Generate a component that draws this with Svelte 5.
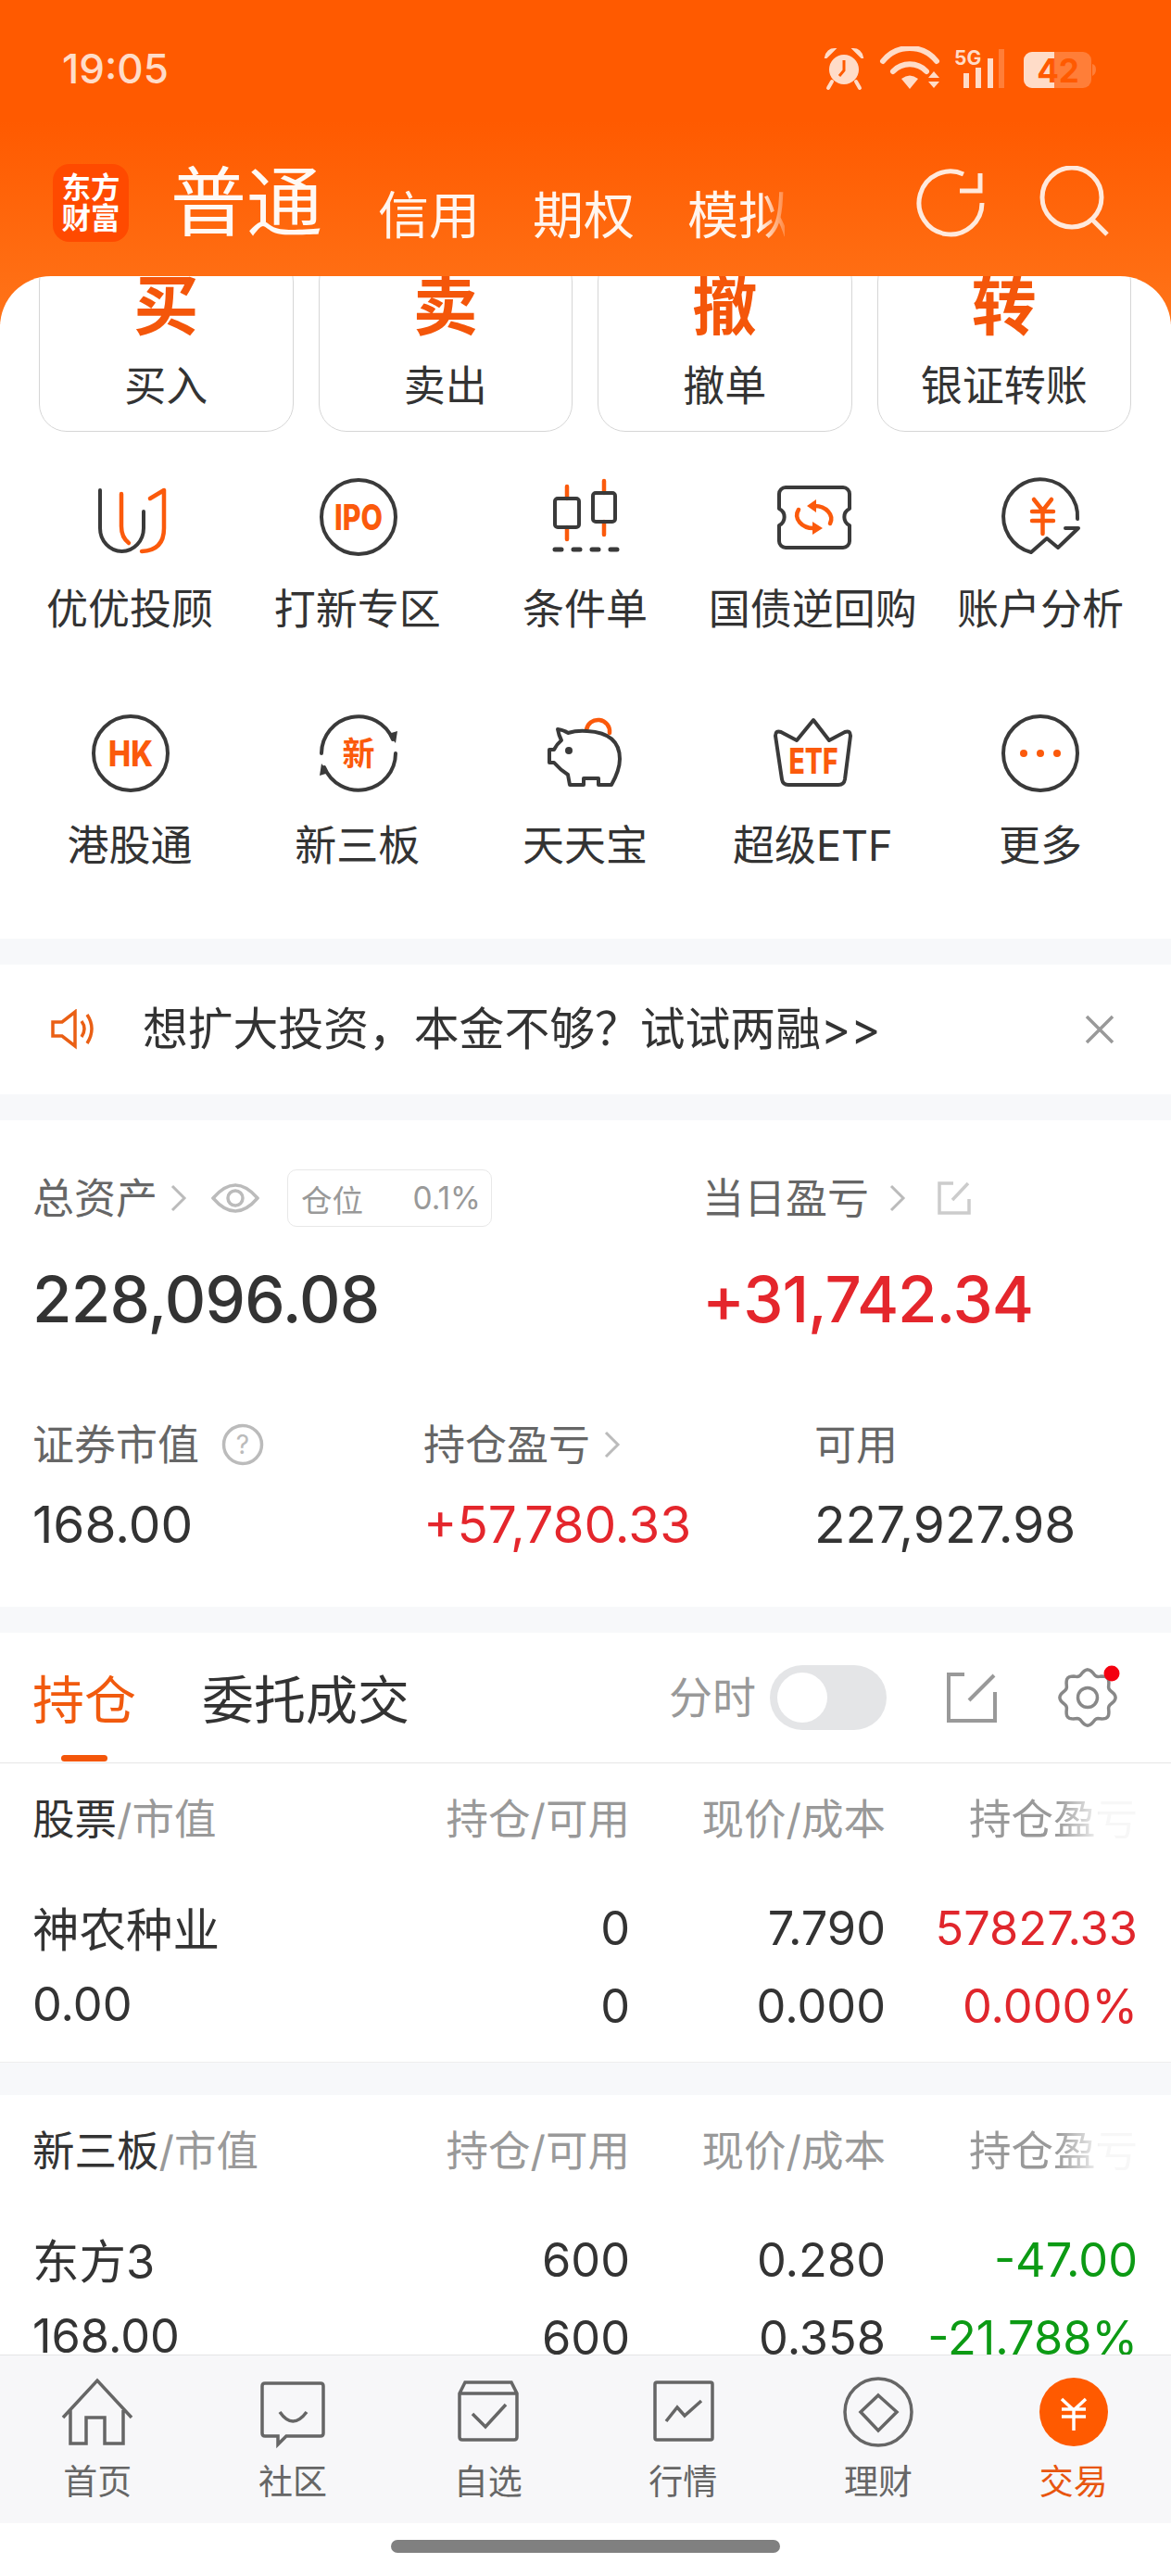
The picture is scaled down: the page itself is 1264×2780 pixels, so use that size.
<script>
	const actions = [
		{ glyph: '买', label: '买入' },
		{ glyph: '卖', label: '卖出' },
		{ glyph: '撤', label: '撤单' },
		{ glyph: '转', label: '银证转账' }
	];

	const shortcuts = [
		{ icon: 'advisor', label: '优优投顾' },
		{ icon: 'ipo', label: '打新专区' },
		{ icon: 'candle', label: '条件单' },
		{ icon: 'repo', label: '国债逆回购' },
		{ icon: 'analysis', label: '账户分析' },
		{ icon: 'hk', label: '港股通' },
		{ icon: 'neeq', label: '新三板' },
		{ icon: 'piggy', label: '天天宝' },
		{ icon: 'etf', label: '超级ETF' },
		{ icon: 'more', label: '更多' }
	];

	const holdings = [
		{
			market: '股票',
			rows: [
				{ name: '神农种业', amount: '0', price: '7.790', profit: '57827.33', tone: 'up' },
				{ name: '0.00', amount: '0', price: '0.000', profit: '0.000%', tone: 'up' }
			]
		},
		{
			market: '新三板',
			rows: [
				{ name: '东方3', amount: '600', price: '0.280', profit: '-47.00', tone: 'down' },
				{ name: '168.00', amount: '600', price: '0.358', profit: '-21.788%', tone: 'down' }
			]
		}
	];

	const tabs = [
		{ icon: 'home', label: '首页' },
		{ icon: 'community', label: '社区' },
		{ icon: 'watch', label: '自选' },
		{ icon: 'market', label: '行情' },
		{ icon: 'wealth', label: '理财' },
		{ icon: 'trade', label: '交易' }
	];

	// Wavy outline for the settings cog
	function gearPath(cx, cy, radius, wave, teeth) {
		const points = [];
		for (let i = 0; i < 96; i++) {
			const t = (i / 96) * Math.PI * 2;
			const r = radius + wave * Math.cos(teeth * t);
			points.push(`${(cx + r * Math.sin(t)).toFixed(1)} ${(cy - r * Math.cos(t)).toFixed(1)}`);
		}
		return 'M' + points.join('L') + 'Z';
	}
</script>

<div class="page">
	<header class="top">
		<div class="status">
			<span class="time">19:05</span>
			<svg class="status-icons" width="296" height="50" viewBox="0 0 296 50">
				<circle cx="23" cy="25" r="16" class="st-fill" />
				<path d="M23 15V26L18 32" class="st-hand" />
				<path d="M3 12Q5 3 13 3L4 12Z M43 12Q41 3 33 3L42 12Z" class="st-fill st-line" />
				<path d="M10 38L6 45M36 38L40 45" class="st-line" />
				<path d="M65 16A37 37 0 0 1 123 16" class="st-line wide" />
				<path d="M76 27A25 25 0 0 1 112 27" class="st-line wide" />
				<path d="M85 35Q94 28 103 35L94 46Z" class="st-fill" />
				<path d="M114 34H126L120 27ZM114 38H126L120 45Z" class="st-fill" />
				<text x="142" y="20" class="st-5g">5G</text>
				<rect x="152" y="29" width="6" height="16" class="st-fill" />
				<rect x="165" y="23" width="6" height="22" class="st-fill" />
				<rect x="178" y="13" width="6" height="32" class="st-fill" />
				<rect x="190" y="3" width="6" height="42" class="st-faint" />
				<rect x="217" y="6" width="73" height="39" rx="9" class="st-faint" />
				<path d="M226 6H250V45H226A9 9 0 0 1 217 36V15A9 9 0 0 1 226 6Z" class="st-fill" />
				<path d="M291 19Q295 20 295 25Q295 30 291 32Z" class="st-faint" />
				<text x="254" y="39" class="st-batt">42</text>
			</svg>
		</div>
		<nav class="nav">
			<div class="logo"><span>东方</span><span>财富</span></div>
			<span class="nav-main">普通</span>
			<span class="nav-item">信用</span>
			<span class="nav-item">期权</span>
			<span class="nav-item faded">模拟</span>
			<svg class="nav-btn refresh" width="80" height="80" viewBox="0 0 80 80">
				<path d="M54 9A34 34 0 1 0 74 40" />
				<path d="M50 27H72V8" />
			</svg>
			<svg class="nav-btn" width="80" height="80" viewBox="0 0 80 80">
				<circle cx="36" cy="34" r="32" />
				<path d="M58 58L74 74" />
			</svg>
		</nav>
	</header>

	<main class="content">
		<section class="actions">
			{#each actions as action}
				<div class="action">
					<span class="action-glyph">{action.glyph}</span>
					<span class="action-label">{action.label}</span>
				</div>
			{/each}
		</section>

		<section class="shortcuts">
			{#each shortcuts as item}
				<div class="shortcut">
					<svg width="100" height="100" viewBox="0 0 100 100" class="shortcut-icon">
						{#if item.icon === 'advisor'}
							<path class="ink" d="M18 21V62A23.5 25 0 0 0 65 62V44" />
							<path class="accent" d="M41 25V60Q41 72 49 78" />
							<path class="accent" d="M72 30L87 21V62Q87 86 63 87" />
						{:else if item.icon === 'ipo'}
							<circle class="ink" cx="51" cy="50" r="40" />
							<text class="badge" x="51" y="64" textLength="52" lengthAdjust="spacingAndGlyphs">IPO</text>
						{:else if item.icon === 'candle'}
							<path class="accent" d="M31 17V30M31 61V74M71 11V24M71 55V69" />
							<rect class="ink" x="18" y="30" width="26" height="31" rx="3" />
							<rect class="ink" x="59" y="24" width="24" height="31" rx="3" />
							<path class="ink thick" d="M18 85H25M38 85H45M58 85H65M78 85H85" />
						{:else if item.icon === 'repo'}
							<path class="ink" d="M21 18H83A7 7 0 0 1 90 25V41A10 10 0 0 0 90 59V76A7 7 0 0 1 83 83H21A7 7 0 0 1 14 76V59A10 10 0 0 0 14 41V25A7 7 0 0 1 21 18Z" />
							<path class="accent" d="M52 38A18 14 0 0 1 69 57M35 42A18 14 0 0 0 52 62" />
							<path class="accent-fill" d="M54 31L44 38L54 45ZM50 55L61 62L50 69Z" />
						{:else if item.icon === 'analysis'}
							<path class="ink" d="M90 52A40 40 0 1 0 40 88L57 73L69 83L91 62H77" />
							<path class="accent" d="M43 31L52.5 43L62 31M41 44H64M41 54H64M52.5 43V68" />
						{:else if item.icon === 'hk'}
							<circle class="ink" cx="51" cy="50" r="40" />
							<text class="badge" x="51" y="64" textLength="48" lengthAdjust="spacingAndGlyphs">HK</text>
						{:else if item.icon === 'neeq'}
							<path class="ink" d="M11 50A40 40 0 0 1 88 35M91 50A40 40 0 0 1 14 65" />
							<path class="ink-fill" d="M83 29L93 26L91 39ZM19 71L9 74L11 61Z" />
							<text class="badge han" x="51" y="63">新</text>
						{:else if item.icon === 'piggy'}
							<path class="accent" d="M52 25A12 12 0 0 1 77 28" />
							<path class="ink" d="M21 24Q28 25 32 28Q42 25 53 26Q88 28 88 56Q88 68 79 84H65V77H49V84H34L32 73Q24 68 17 60H12V46H17Q20 40 25 36Q22 30 21 24Z" />
							<circle class="ink-fill" cx="33" cy="47" r="4" />
						{:else if item.icon === 'etf'}
							<path class="ink" d="M51 14L68 36L85 27Q91 25 91 31L85 78Q84 84 78 84H24Q18 84 17 78L10 31Q10 25 16 27L33 36Z" />
							<text class="badge" x="51" y="72" textLength="53" lengthAdjust="spacingAndGlyphs">ETF</text>
						{:else}
							<circle class="ink" cx="50" cy="50" r="40" />
							<circle class="accent-fill" cx="32" cy="50" r="4" />
							<circle class="accent-fill" cx="50" cy="50" r="4" />
							<circle class="accent-fill" cx="68" cy="50" r="4" />
						{/if}
					</svg>
					<span class="shortcut-label">{item.label}</span>
				</div>
			{/each}
		</section>

		<div class="gap"></div>

		<section class="notice">
			<svg class="notice-icon" width="50" height="44" viewBox="0 0 50 44">
				<path d="M3 14H13L27 3V40L13 29H3Z" />
				<path d="M34 13Q40 21 34 30M40 6Q50 21 40 37" />
			</svg>
			<span class="notice-text">想扩大投资，本金不够？试试两融&gt;&gt;</span>
			<svg class="notice-close" width="32" height="32" viewBox="0 0 32 32">
				<path d="M2 2L30 30M30 2L2 30" />
			</svg>
		</section>

		<div class="gap"></div>

		<section class="assets">
			<div class="assets-top">
				<div>
					<div class="label-row">
						<span class="label">总资产</span>
						<svg class="chev" width="20" height="30" viewBox="0 0 20 30"><path d="M3 2L16 15L3 28" /></svg>
						<svg class="eye" width="52" height="36" viewBox="0 0 52 36">
							<path d="M2 18Q26 -10 50 18Q26 46 2 18Z" />
							<circle cx="26" cy="18" r="8" />
						</svg>
						<div class="ratio"><span>仓位</span><span>0.1%</span></div>
					</div>
					<div class="total">228,096.08</div>
				</div>
				<div>
					<div class="label-row">
						<span class="label">当日盈亏</span>
						<svg class="chev day" width="20" height="30" viewBox="0 0 20 30"><path d="M3 2L16 15L3 28" /></svg>
						<svg class="open-small" width="38" height="38" viewBox="0 0 38 38">
							<path d="M18 3H3V35H35V20M17 21L34 3" />
						</svg>
					</div>
					<div class="total up">+31,742.34</div>
				</div>
			</div>
			<div class="assets-bottom">
				<div>
					<div class="label-line">
						<span class="label">证券市值</span>
						<svg class="help" width="46" height="46" viewBox="0 0 46 46">
							<circle cx="23" cy="23" r="20.5" />
							<text x="23" y="33">?</text>
						</svg>
					</div>
					<div class="amount">168.00</div>
				</div>
				<div>
					<div class="label-line">
						<span class="label">持仓盈亏</span>
						<svg class="chev hold" width="20" height="30" viewBox="0 0 20 30"><path d="M3 2L16 15L3 28" /></svg>
					</div>
					<div class="amount up">+57,780.33</div>
				</div>
				<div>
					<div class="label-line"><span class="label">可用</span></div>
					<div class="amount">227,927.98</div>
				</div>
			</div>
		</section>

		<div class="gap"></div>

		<section class="tabs">
			<span class="tab active">持仓</span>
			<span class="tab">委托成交</span>
			<span class="realtime">分时</span>
			<div class="toggle"><span class="knob"></span></div>
			<svg class="open-big" width="60" height="60" viewBox="0 0 60 60">
				<path d="M22 5H5V55H55V24M27 33L54 6" />
			</svg>
			<svg class="gear" width="76" height="70" viewBox="0 0 76 70">
				<path d={gearPath(37, 35, 27.5, 2.6, 8)} />
				<circle cx="37" cy="35" r="10.5" />
				<circle class="dot" cx="63" cy="9" r="8.5" />
			</svg>
		</section>

		{#each holdings as group, g}
			<section class="holding" class:second={g > 0}>
				<div class="grid head">
					<span><b>{group.market}</b>/市值</span>
					<span>持仓/可用</span>
					<span>现价/成本</span>
					<span class="fade-end"><i>持仓盈亏</i></span>
				</div>
				{#each group.rows as row}
					<div class="grid row">
						<span>{row.name}</span>
						<span>{row.amount}</span>
						<span>{row.price}</span>
						<span class={row.tone}>{row.profit}</span>
					</div>
				{/each}
			</section>
		{/each}
	</main>

	<footer class="tabbar">
		{#each tabs as tab}
			<div class="tabbar-item" class:current={tab.icon === 'trade'}>
				<svg width="80" height="80" viewBox="0 0 80 80">
					{#if tab.icon === 'home'}
						<path d="M3 44L40 4L77 44M11 36V72H28V44H48V72H68V36" />
					{:else if tab.icon === 'community'}
						<path d="M10 7H70Q73 7 73 10V61Q73 64 70 64H33L24 73V64H10Q7 64 7 61V10Q7 7 10 7Z" />
						<path d="M26 38Q40 58 55 38" />
					{:else if tab.icon === 'watch'}
						<path d="M9 18L15 6H65L71 18V65Q71 68 68 68H12Q9 68 9 65ZM9 18H71" />
						<path d="M23 40L37 54L59 30" />
					{:else if tab.icon === 'market'}
						<rect x="10" y="6" width="62" height="62" rx="2" />
						<path d="M22 48L34 33L42 42L60 26" />
					{:else if tab.icon === 'wealth'}
						<circle cx="40" cy="38" r="36" />
						<path d="M40 20L60 38L40 58L21 38Z" />
					{:else}
						<circle class="coin" cx="40" cy="38" r="37" />
						<path class="coin-mark" d="M27 24L40 36L53 24M27 35H53M27 43H53M40 36V58" />
					{/if}
				</svg>
				<span>{tab.label}</span>
			</div>
		{/each}
	</footer>

	<div class="home-area"><span class="home-bar"></span></div>
</div>

<style>
	:global(body) {
		margin: 0;
		background: #fff;
	}

	.page {
		width: 1264px;
		height: 2780px;
		display: flex;
		flex-direction: column;
		overflow: hidden;
		background: #fff;
		color: #333;
		font-family: Inter, 'Noto Sans CJK SC', sans-serif;
	}

	/* Orange header, runs on behind the rounded card corners */
	.top {
		flex: none;
		height: 350px;
		margin-bottom: -52px;
		box-sizing: border-box;
		background: linear-gradient(180deg, #ff5a00 0, #ff5a00 130px, #ff7419 350px);
		color: #fff;
	}

	.status {
		height: 177px;
		box-sizing: border-box;
		padding: 50px 80px 0 67px;
		display: flex;
		justify-content: space-between;
		align-items: flex-start;
	}

	.time {
		font-size: 44px;
		font-weight: 500;
		line-height: 48px;
		color: #ffdcc8;
	}

	.st-fill { fill: #ffdcc8; }
	.st-faint { fill: rgba(255, 255, 255, 0.22); }
	.st-line { stroke: #ffdcc8; stroke-width: 4; fill: none; stroke-linecap: round; }
	.st-fill.st-line { fill: #ffdcc8; stroke-width: 2; }
	.st-line.wide { stroke-width: 6; }
	.st-hand { stroke: #ff5a00; stroke-width: 3; fill: none; }
	.st-5g { fill: #ffdcc8; font-size: 21px; font-weight: 700; }
	.st-batt { fill: #ff5a00; font-size: 35px; font-weight: 700; text-anchor: middle; }

	.nav {
		display: flex;
		align-items: center;
		height: 84px;
		padding-left: 57px;
	}

	.logo {
		width: 82px;
		height: 84px;
		border-radius: 18px;
		background: #ff4a00;
		display: flex;
		flex-direction: column;
		align-items: center;
		justify-content: center;
		font-size: 31.5px;
		font-weight: 700;
		line-height: 33px;
	}

	.nav-main {
		margin-left: 45px;
		margin-right: -2px;
		font-size: 82px;
		line-height: 84px;
		color: #fff9f4;
	}

	.nav-item {
		margin: 26px 0 0 62px;
		width: 105px;
		font-size: 55px;
		line-height: 58px;
		white-space: nowrap;
		color: #fff5ee;
	}

	.nav-item.faded {
		-webkit-mask-image: linear-gradient(90deg, #000 75%, rgba(0, 0, 0, 0.25) 100%);
		mask-image: linear-gradient(90deg, #000 75%, rgba(0, 0, 0, 0.25) 100%);
	}

	.nav-btn {
		flex: none;
		margin-top: 0;
		margin-left: 55px;
		fill: none;
		stroke: #ffe9dc;
		stroke-width: 5;
	}

	.nav-btn.refresh {
		margin-left: 139px;
	}

	.content {
		flex: 1;
		min-height: 0;
		position: relative;
		overflow: hidden;
		background: #fff;
		border-radius: 55px 55px 0 0;
	}

	.actions {
		margin-top: -24px;
		padding: 0 43px 0 42px;
		display: grid;
		grid-template-columns: repeat(4, 1fr);
		gap: 27px;
	}

	.action {
		height: 192px;
		box-sizing: border-box;
		padding-top: 21px;
		display: flex;
		flex-direction: column;
		align-items: center;
		border: 1.5px solid #d6d6d6;
		border-radius: 30px;
	}

	.action-glyph {
		font-size: 70px;
		line-height: 70px;
		font-weight: 700;
		color: #f4560a;
	}

	.action-label {
		margin-top: 23px;
		font-size: 45px;
		line-height: 56px;
		color: #333;
	}

	.shortcuts {
		padding: 42px 18px 70px 17px;
		display: grid;
		grid-template-columns: repeat(5, 1fr);
		row-gap: 75px;
	}

	.shortcut {
		display: flex;
		flex-direction: column;
		align-items: center;
		gap: 20px;
	}

	.shortcut-label {
		font-size: 45px;
		line-height: 60px;
		white-space: nowrap;
	}

	.ink, .accent {
		fill: none;
		stroke-width: 4;
		stroke-linecap: round;
		stroke-linejoin: round;
	}

	.ink { stroke: #3a3a3a; }
	.ink.thick { stroke-width: 5; }
	.accent { stroke: #fb5a0c; stroke-width: 4.5; }
	.ink-fill { fill: #3a3a3a; }
	.accent-fill { fill: #fb5a0c; }

	.badge {
		fill: #fb5a0c;
		font-size: 38px;
		font-weight: 800;
		text-anchor: middle;
	}

	.badge.han {
		font-size: 35px;
		font-weight: 700;
	}

	.gap {
		height: 28px;
		background: #f7f8fa;
	}

	.notice {
		height: 140px;
		display: flex;
		align-items: center;
		padding: 0 61px 0 54px;
	}

	.notice-icon {
		flex: none;
		fill: none;
		stroke: #ea5f14;
		stroke-width: 3.5;
	}

	.notice-text {
		flex: 1;
		margin-left: 50px;
		font-size: 48.8px;
		line-height: 60px;
		white-space: nowrap;
	}

	.notice-close {
		flex: none;
		fill: none;
		stroke: #999;
		stroke-width: 3.5;
	}

	.assets {
		height: 525px;
		box-sizing: border-box;
		padding: 53px 0 0 35px;
	}

	.assets-top {
		display: grid;
		grid-template-columns: 723px 1fr;
	}

	.label-row {
		height: 62px;
		display: flex;
		align-items: center;
	}

	.label {
		padding-top: 2px;
		font-size: 45px;
		line-height: 60px;
		color: #666;
		white-space: nowrap;
	}

	.chev {
		flex: none;
		margin-left: 13px;
		fill: none;
		stroke: #bbb;
		stroke-width: 3;
	}

	.chev.day { margin-left: 21px; }

	.eye {
		flex: none;
		margin-left: 25px;
		fill: none;
		stroke: #bbb;
		stroke-width: 3.5;
	}

	.open-small {
		flex: none;
		margin-left: 32px;
		fill: none;
		stroke: #ccc;
		stroke-width: 3.5;
	}

	.ratio {
		margin-left: 30px;
		width: 221px;
		height: 62px;
		box-sizing: border-box;
		padding: 0 11px 0 14px;
		display: flex;
		justify-content: space-between;
		align-items: center;
		border: 1.5px solid #e8e8e8;
		border-radius: 10px;
		font-size: 33.5px;
		color: #999;
	}

	.total {
		margin-top: 38px;
		font-size: 69px;
		letter-spacing: -0.8px;
		line-height: 80px;
		font-weight: 500;
		color: #333;
	}

	.total.up {
		letter-spacing: -1.1px;
		color: #e4262c;
	}

	.up { color: #e4262c; }
	.down { color: #0c9a14; }

	.assets-bottom {
		margin-top: 87px;
		display: grid;
		grid-template-columns: 422px 422px 1fr;
	}

	.label-line {
		height: 60px;
		display: flex;
		align-items: center;
	}

	.help {
		flex: none;
		margin-left: 24px;
		fill: none;
		stroke: #bbb;
		stroke-width: 3.5;
	}

	.help text {
		fill: #bbb;
		stroke: none;
		font-size: 28px;
		text-anchor: middle;
	}

	.chev.hold { margin-left: 14px; }

	.amount {
		margin-top: 21px;
		font-size: 55px;
		line-height: 70px;
	}

	.tabs {
		height: 141px;
		box-sizing: border-box;
		padding: 0 51px 0 35px;
		display: flex;
		align-items: center;
		border-bottom: 1.5px solid #e6e6e6;
	}

	.tab {
		position: relative;
		margin-right: 71px;
		padding-top: 6px;
		font-size: 56px;
		line-height: 70px;
	}

	.tab.active {
		color: #f15a0e;
	}

	.tab.active::after {
		content: '';
		position: absolute;
		left: 31px;
		right: 31px;
		top: 100px;
		height: 7px;
		border-radius: 4px;
		background: #f4560a;
	}

	.realtime {
		margin-left: auto;
		font-size: 47px;
		line-height: 60px;
		color: #999;
	}

	.toggle {
		flex: none;
		margin-left: 15px;
		width: 126px;
		height: 70px;
		box-sizing: border-box;
		padding: 8px;
		border-radius: 35px;
		background: #e4e5e7;
	}

	.knob {
		display: block;
		width: 54px;
		height: 54px;
		border-radius: 50%;
		background: #fff;
	}

	.open-big {
		flex: none;
		margin-left: 62px;
		fill: none;
		stroke: #999;
		stroke-width: 4;
	}

	.gear {
		flex: none;
		margin-left: 58px;
		fill: none;
		stroke: #888;
		stroke-width: 3.5;
	}

	.gear .dot {
		fill: #f4000f;
		stroke: none;
	}

	.holding {
		padding-bottom: 19px;
		border-bottom: 1.5px solid #eee;
	}

	.holding.second {
		border-top: 35px solid #f7f8fa;
		border-bottom: 0;
	}

	.grid {
		display: grid;
		grid-template-columns: 405px 240px 276px 272px;
		padding: 0 36px 0 35px;
		align-items: center;
	}

	.grid span {
		text-align: right;
		white-space: nowrap;
	}

	.grid span:first-child {
		text-align: left;
	}

	.head {
		height: 114px;
		margin-bottom: 21px;
		font-size: 45.5px;
		color: #999;
	}

	.head b {
		font-weight: 400;
		color: #333;
	}

	.fade-end i {
		display: inline-block;
		font-style: normal;
		-webkit-mask-image: linear-gradient(90deg, #000 52%, rgba(0, 0, 0, 0.08) 78%);
		mask-image: linear-gradient(90deg, #000 52%, rgba(0, 0, 0, 0.08) 78%);
	}

	.row {
		height: 84px;
		font-size: 50.5px;
		color: #333;
	}

	.row span:first-child {
		padding-bottom: 3px;
	}

	.row .up { color: #e0262c; }
	.row .down { color: #0c9a14; }

	.tabbar {
		flex: none;
		height: 182px;
		box-sizing: border-box;
		border-top: 1.5px solid #e4e4e6;
		padding-top: 23px;
		background: #f7f7f9;
		display: grid;
		grid-template-columns: repeat(6, 1fr);
		position: relative;
	}

	.tabbar-item {
		display: flex;
		flex-direction: column;
		align-items: center;
		gap: 12px;
		font-size: 37px;
		line-height: 44px;
		color: #666;
	}

	.tabbar-item.current {
		color: #e8550f;
	}

	.tabbar-item svg {
		fill: none;
		stroke: #666;
		stroke-width: 3.5;
	}

	.tabbar-item .coin {
		fill: #ff5a00;
		stroke: none;
	}

	.tabbar-item .coin-mark {
		stroke: #fff;
		stroke-width: 3.5;
	}

	.home-area {
		flex: none;
		height: 57px;
		box-sizing: border-box;
		display: flex;
		justify-content: center;
		padding-top: 18px;
	}

	.home-bar {
		width: 420px;
		height: 14px;
		border-radius: 7px;
		background: #808080;
	}
</style>
